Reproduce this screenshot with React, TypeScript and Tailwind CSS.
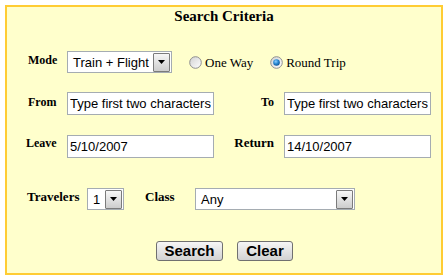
import React from "react";

const serif = "font-['Liberation_Serif','Times_New_Roman',serif]";
const sans = "font-['Liberation_Sans',Arial,sans-serif]";

function Arrow() {
  return (
    <span className="flex h-[19px] w-[17px] items-center justify-center rounded-[1px] border border-[#7b7b7b] bg-gradient-to-b from-[#f7f7f7] to-[#cdcdcd]">
      <svg width="7" height="4" viewBox="0 0 7 4">
        <path d="M0 0h7L3.5 4z" fill="#000" />
      </svg>
    </span>
  );
}

function Dropdown({ value, w }: { value: string; w: string }) {
  return (
    <div className={`${w} flex h-[22px] items-center justify-between border border-[#a5acb2] bg-white pr-[1px]`}>
      <span className={`${sans} pl-[5px] text-[13px] leading-[15px] text-black`}>{value}</span>
      <Arrow />
    </div>
  );
}

function Radio({ checked }: { checked?: boolean }) {
  return (
    <svg width="13" height="13" viewBox="0 0 13 13">
      <defs>
        <linearGradient id={checked ? "rg1" : "rg0"} x1="0" y1="0" x2="1" y2="1">
          <stop offset="0" stopColor="#d2d2d2" />
          <stop offset="1" stopColor="#ffffff" />
        </linearGradient>
        <radialGradient id="dot" cx="0.4" cy="0.35" r="0.7">
          <stop offset="0" stopColor="#8fd0ff" />
          <stop offset="0.5" stopColor="#2a8ad4" />
          <stop offset="1" stopColor="#0b4f8f" />
        </radialGradient>
      </defs>
      <circle cx="6.5" cy="6.5" r="5.8" fill={checked ? "url(#rg1)" : "url(#rg0)"} stroke="#8e8e8e" strokeWidth="1" />
      {checked && <circle cx="6.5" cy="6.5" r="3.3" fill="url(#dot)" />}
    </svg>
  );
}

function TextBox({ value }: { value: string }) {
  return (
    <input
      readOnly
      value={value}
      className={`${sans} h-[23px] w-[147px] border border-[#a5acb2] bg-white px-[2px] text-[13px] text-black outline-none`}
    />
  );
}

export default function App() {
  return (
    <div className="h-[280px] w-[448px] bg-white pl-[5px] pt-[5px]">
      <div className="flex h-[270px] w-[438px] flex-col border-2 border-[#ffcc33] bg-[#ffffcc] text-black">
        {/* title */}
        <div className={`${serif} mt-[1px] text-center text-[15px] font-bold leading-[17px]`}>
          Search Criteria
        </div>

        {/* mode */}
        <div className="mt-[26px] flex h-[22px] items-start">
          <div className={`${serif} mt-[2px] w-[60px] pl-[21px] text-[12px] font-bold leading-[14px]`}>Mode</div>
          <Dropdown value="Train + Flight" w="w-[105px]" />
          <div className="ml-[17px] mt-[4px] flex items-center">
            <Radio />
            <span className={`${serif} ml-[3px] text-[13px] leading-[15px]`}>One Way</span>
          </div>
          <div className="ml-[17px] mt-[4px] flex items-center">
            <Radio checked />
            <span className={`${serif} ml-[3px] text-[13px] leading-[15px]`}>Round Trip</span>
          </div>
        </div>

        {/* from / to */}
        <div className="mt-[19px] flex h-[23px] items-start">
          <div className={`${serif} mt-[3px] w-[60px] pl-[21px] text-[12px] font-bold leading-[14px]`}>From</div>
          <TextBox value="Type first two characters" />
          <div className={`${serif} mt-[3px] w-[70px] pr-[10px] text-right text-[12px] font-bold leading-[14px]`}>To</div>
          <TextBox value="Type first two characters" />
        </div>

        {/* leave / return */}
        <div className="mt-[20px] flex h-[22px] items-start">
          <div className={`${serif} mt-[1px] w-[60px] pl-[19px] text-[12px] font-bold leading-[14px]`}>Leave</div>
          <TextBox value="5/10/2007" />
          <div className={`${serif} w-[70px] pr-[10px] text-right text-[13px] font-bold leading-[15px]`}>Return</div>
          <TextBox value="14/10/2007" />
        </div>

        {/* travelers / class */}
        <div className="mt-[31px] flex h-[22px] items-start">
          <div className={`${serif} mt-[1px] w-[80px] pl-[20px] text-[13px] font-bold leading-[15px]`}>Travelers</div>
          <Dropdown value="1" w="w-[37px]" />
          <div className={`${serif} mt-[1px] w-[71px] pl-[21px] text-[13px] font-bold leading-[15px]`}>Class</div>
          <Dropdown value="Any" w="w-[160px]" />
        </div>

        {/* buttons */}
        <div className="mt-[31px] flex justify-center gap-[14px] pl-[1px]">
          <button className={`${sans} h-[20px] w-[67px] rounded-[3px] border border-[#707070] bg-gradient-to-b from-[#f6f6f6] to-[#d2d2d2] text-[15px] font-bold leading-[18px] text-black`}>
            Search
          </button>
          <button className={`${sans} h-[20px] w-[56px] rounded-[3px] border border-[#707070] bg-gradient-to-b from-[#f6f6f6] to-[#d2d2d2] text-[15px] font-bold leading-[18px] text-black`}>
            Clear
          </button>
        </div>
      </div>
    </div>
  );
}
